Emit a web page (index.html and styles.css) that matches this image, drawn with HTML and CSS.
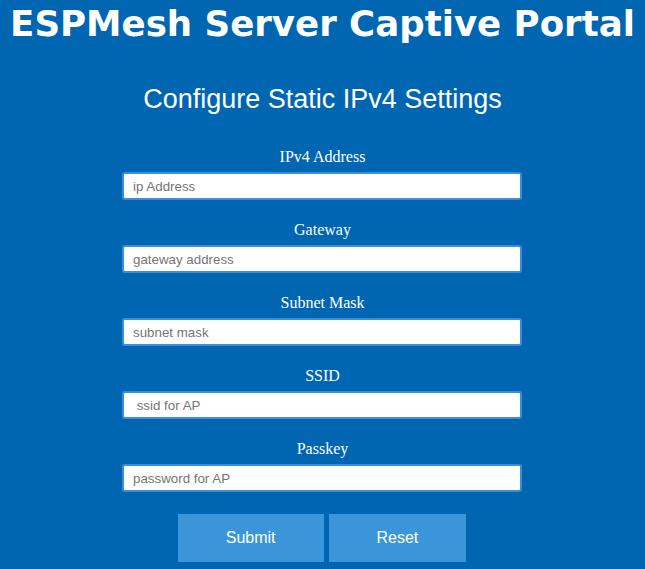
FILE: index.html
```html
<!DOCTYPE html>
<html>
<head>
<meta charset="utf-8">
<title>ESPMesh Server Captive Portal</title>
<link rel="stylesheet" href="styles.css">
</head>
<body>
<h1 class="title">ESPMesh Server Captive Portal</h1>
<h2 class="subtitle">Configure Static IPv4 Settings</h2>
<form class="form">
  <div class="field">
    <label class="label" for="ip">IPv4 Address</label>
    <input class="input" id="ip" type="text" placeholder="ip Address">
  </div>
  <div class="field">
    <label class="label" for="gw">Gateway</label>
    <input class="input" id="gw" type="text" placeholder="gateway address">
  </div>
  <div class="field">
    <label class="label" for="mask">Subnet Mask</label>
    <input class="input" id="mask" type="text" placeholder="subnet mask">
  </div>
  <div class="field">
    <label class="label" for="ssid">SSID</label>
    <input class="input" id="ssid" type="text" placeholder=" ssid for AP">
  </div>
  <div class="field">
    <label class="label" for="pass">Passkey</label>
    <input class="input" id="pass" type="text" placeholder="password for AP">
  </div>
  <div class="actions">
    <button class="btn" type="submit">Submit</button>
    <button class="btn" type="reset">Reset</button>
  </div>
</form>
</body>
</html>
```
FILE: styles.css
```css
html, body {
  margin: 0;
  padding: 0;
  background: #0066b2;
  color: #ffffff;
  font-family: "Liberation Serif", serif;
}

.title {
  margin: 0;
  text-align: center;
  font-family: "DejaVu Sans", sans-serif;
  font-weight: bold;
  font-size: 35.6px;
  line-height: 48px;
  white-space: nowrap;
}

.subtitle {
  margin: 36px 0 0;
  text-align: center;
  font-family: "Liberation Sans", Arial, sans-serif;
  font-weight: normal;
  font-size: 27px;
  line-height: 30px;
}

.form {
  display: flex;
  flex-direction: column;
  align-items: center;
  margin-top: 33px;
}

.field {
  display: flex;
  flex-direction: column;
  align-items: center;
  margin-bottom: 20px;
}

.label {
  font-size: 16px;
  line-height: 20px;
  margin-bottom: 5px;
}

.input {
  box-sizing: border-box;
  width: 400px;
  height: 28px;
  margin: 0 1px 0 0;
  padding: 0 9px;
  border: 2px solid #3a8fd6;
  border-radius: 3px;
  background: #ffffff;
  font-family: "Liberation Sans", Arial, sans-serif;
  font-size: 13.33px;
  color: #222222;
}

.input::placeholder {
  color: #757575;
}

.actions {
  display: flex;
  gap: 5px;
  margin-top: 2px;
  margin-right: 1px;
}

.btn {
  margin: 0;
  border: none;
  border-radius: 0;
  padding: 0 48px;
  height: 48px;
  background: #3a96d9;
  color: #ffffff;
  font-family: "Liberation Sans", Arial, sans-serif;
  font-size: 16px;
}
```
